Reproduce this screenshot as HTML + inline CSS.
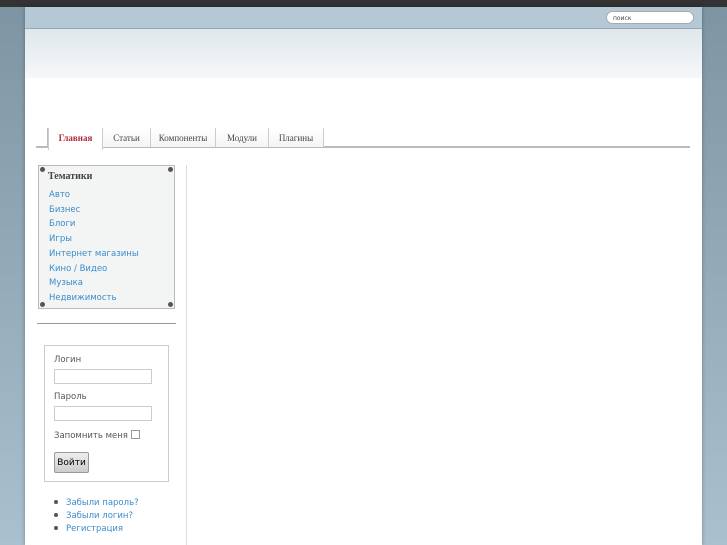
<!DOCTYPE html>
<html><head><meta charset="utf-8"><style>
*{margin:0;padding:0;box-sizing:border-box}
body{width:727px;height:545px;overflow:hidden;background:linear-gradient(to bottom,#7d95a2,#a9c0cf);font-family:"DejaVu Sans","Liberation Sans",sans-serif;position:relative}
.top{position:absolute;left:0;top:0;width:727px;height:7px;background:#333}
.page{position:absolute;left:25px;top:7px;width:677px;height:538px;background:#fff;box-shadow:0 0 4px rgba(0,0,0,.3)}
.hdr{height:22px;background:#b5c8d6;border-bottom:1px solid #93a9b8;position:relative}
.search{position:absolute;left:581px;top:4px;width:88px;height:13px;background:#fff;border:1px solid #aaa;border-radius:7px;font-size:6px;padding:3px 0 0 6px;color:#444}
.grad{height:49px;background:linear-gradient(to bottom,#dfe7eb,#f5f8f9)}
.tabs{position:absolute;left:11px;top:121px;width:654px;height:20px;border-bottom:2px solid #bbb}
.tab{position:absolute;top:0;height:19px;font-family:"Liberation Serif",serif;font-size:9px;color:#444;text-align:center;line-height:20px;border-right:1px solid #ccc;background:linear-gradient(#fff,#f4f4f4)}
.side{position:absolute;left:13px;top:158px;width:137px;height:144px;background:#f3f4f4;border:1px solid #bbb}
.side h3{font-family:"Liberation Serif",serif;font-size:10px;color:#444;margin:5px 0 6px 9px}
.side a{display:block;font-size:8.5px;color:#3a8ccc;margin-left:10px;line-height:14.7px}
.dot{position:absolute;width:5px;height:5px;border-radius:50%;background:#555}
.hr{position:absolute;left:12px;top:316px;width:139px;border-top:1px solid #999}
.vl{position:absolute;left:161px;top:158px;height:380px;border-left:1px solid #ddd}
.login{position:absolute;left:19px;top:338px;width:125px;height:137px;border:1px solid #ccc;font-size:8.5px;color:#555}
.inp{position:absolute;left:9px;width:98px;height:15px;border:1px solid #ccc}
.btn{position:absolute;left:9px;top:106px;width:35px;height:21px;border:1px solid #999;border-radius:2px;background:linear-gradient(#eee,#ccc);color:#000;font-size:9px;text-align:center;line-height:20px}
ul{position:absolute;left:42px;top:490px;font-size:8.5px;color:#3a8ccc;line-height:13px;list-style:none}
ul li:before{content:"";display:inline-block;width:4px;height:4px;border-radius:50%;background:#555;margin:0 8px 1px -13px}
</style></head><body>
<div class="top"></div>
<div class="page">
<div class="hdr"><div class="search">поиск</div></div>
<div class="grad"></div>
<div class="tabs">
<div class="tab" style="left:0;width:12px;background:none;border-right:1px solid #bbb"></div>
<div class="tab" style="left:12px;width:55px;color:#b0283a;font-weight:bold;background:#fff;height:22px;border-left:1px solid #ccc">Главная</div>
<div class="tab" style="left:67px;width:48px">Статьи</div>
<div class="tab" style="left:115px;width:65px">Компоненты</div>
<div class="tab" style="left:180px;width:53px">Модули</div>
<div class="tab" style="left:233px;width:55px">Плагины</div>
</div>
<div class="side"><h3>Тематики</h3>
<a>Авто</a><a>Бизнес</a><a>Блоги</a><a>Игры</a><a>Интернет магазины</a><a>Кино / Видео</a><a>Музыка</a><a>Недвижимость</a>
<div class="dot" style="left:1px;top:1px"></div><div class="dot" style="right:1px;top:1px"></div><div class="dot" style="left:1px;bottom:1px"></div><div class="dot" style="right:1px;bottom:1px"></div>
</div>
<div class="hr"></div><div class="vl"></div>
<div class="login">
<div style="position:absolute;left:9px;top:9px">Логин</div><div class="inp" style="top:23px"></div>
<div style="position:absolute;left:9px;top:46px">Пароль</div><div class="inp" style="top:60px"></div>
<div style="position:absolute;left:9px;top:84px">Запомнить меня <span style="display:inline-block;width:9px;height:9px;border:1px solid #999;vertical-align:-1px"></span></div>
<div class="btn">Войти</div>
</div>
<ul><li>Забыли пароль?</li><li>Забыли логин?</li><li>Регистрация</li></ul>
</div>
</body></html>
